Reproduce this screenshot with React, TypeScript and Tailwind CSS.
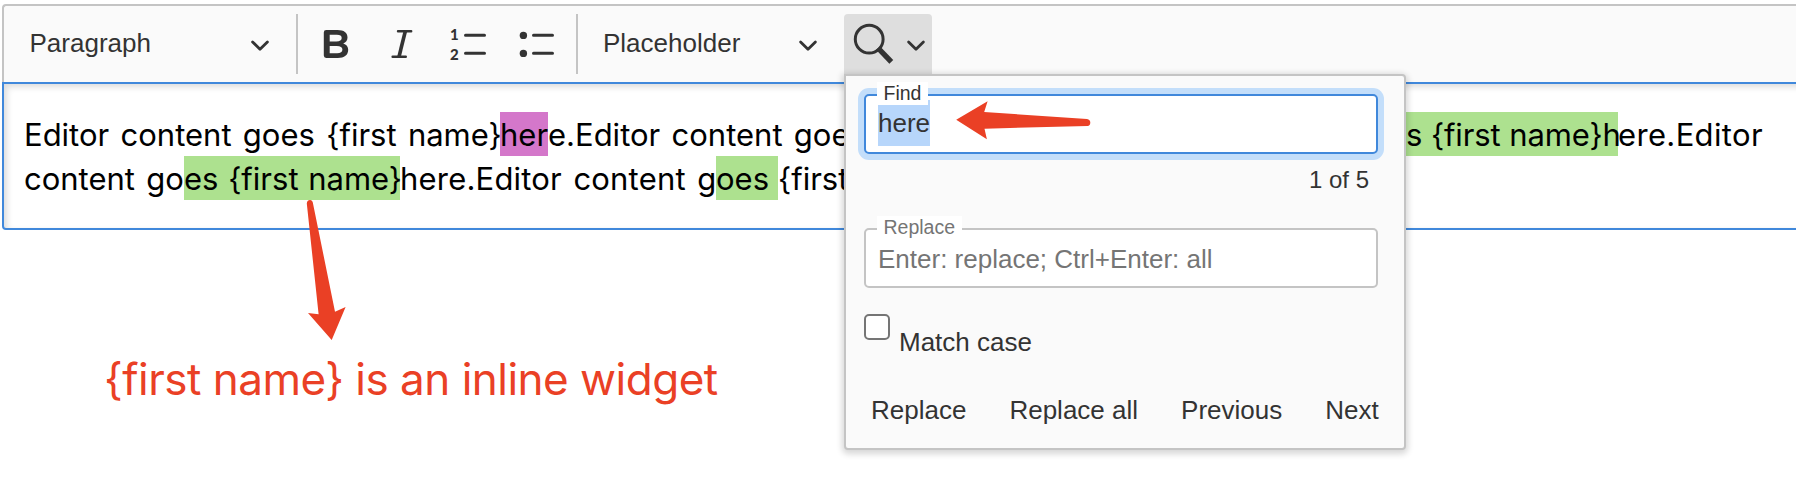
import React from "react";

function Chevron({ className = "" }: { className?: string }) {
  return (
    <svg viewBox="0 0 20 20" className={`h-5 w-5 shrink-0 ${className}`} fill="none" stroke="#333" strokeWidth="2.8" strokeLinecap="round" strokeLinejoin="round">
      <path d="M2.600 7.900 L10 15.300 L17.400 7.900" />
    </svg>
  );
}

function Divider() {
  return <div className="h-[60px] w-[2px] shrink-0 bg-[#c4c4c4]" />;
}

function FormatIcons() {
  return (
    <svg viewBox="0 0 278 60" className="h-[60px] w-[278px] shrink-0" fill="none" stroke="#333" strokeWidth="3" strokeLinecap="round">
      <path
        fill="#333"
        stroke="none"
        fillRule="evenodd"
        d="M28.200 16H39.500c6.500 0 10 2.700 10 7.400 0 2.900-1.600 5-4.300 6 3.200.8 5 3.200 5 6.400 0 5.200-3.800 8.200-10.400 8.200H28.200q-2.400 0-2.400-2.400V18.400q0-2.400 2.400-2.400zM31.700 20.800v6.700h6.600c3.600 0 5.400-1.100 5.400-3.400 0-2.200-1.600-3.300-4.800-3.300zM31.700 32v7.300h7.400c3.500 0 5.300-1.200 5.300-3.700 0-2.400-1.900-3.600-5.600-3.600z"
      />
      <path strokeWidth="2.400" d="M100 17.200h13.200M94.600 42.800h13.200" />
      <path strokeWidth="3.600" strokeLinecap="butt" d="M107.300 17.200L101 42.800" />
      <path d="M167.500 21.300h19M167.500 39.300h19M235.500 21.300h19M235.500 39.300h19" />
      <g fill="#333" stroke="none">
        <circle cx="225.400" cy="21.400" r="3.700" />
        <circle cx="225.400" cy="39.400" r="3.700" />
        <text x="152" y="26" className="font-['Lato',sans-serif] text-[15px] font-black">1</text>
        <text x="152" y="45.600" className="font-['Lato',sans-serif] text-[15px] font-black">2</text>
      </g>
    </svg>
  );
}

function Segment({ children, className = "" }: { children: React.ReactNode; className?: string }) {
  return <span className={`block h-11 shrink-0 pt-px ${className}`}>{children}</span>;
}

function Field({ label, focused, children }: { label: string; focused?: boolean; children: React.ReactNode }) {
  return (
    <div
      className={`relative flex h-[60px] w-[514px] items-start rounded-[5px] border-2 bg-white pl-3 ${
        focused ? "border-[#4088db] shadow-[0_0_0_6px_#c3defa]" : "border-[#c4c4c4]"
      }`}
    >
      {children}
      <span
        className={`absolute -top-[14px] left-[11px] flex h-[23px] items-center bg-white px-[6.5px] pt-px text-[19.5px] ${
          focused ? "text-[#333]" : "text-[#757575]"
        }`}
      >
        {label}
      </span>
    </div>
  );
}

function FindPanel() {
  return (
    <div className="absolute left-[844px] top-[74px] z-10 flex h-[376px] w-[562px] flex-col rounded-[4px] rounded-tl-none border-2 border-[#c4c4c4] bg-[#fafafa] pl-[18px] pt-[18px] shadow-[0_2px_6px_2px_rgba(0,0,0,0.16)]">
      <Field label="Find" focused>
        <span className="mt-1 h-[46px] bg-[#b7d6fb] pt-[4px] leading-[38px]">here</span>
      </Field>
      <div className="mt-[10px] flex h-8 w-[505px] items-center justify-end text-2xl">1 of 5</div>
      <div className="mt-8">
        <Field label="Replace">
          <span className="whitespace-nowrap pt-px leading-[56px] text-[#757575]">Enter: replace; Ctrl+Enter: all</span>
        </Field>
      </div>
      <div className="mt-[26px] flex h-12 items-start">
        <span className="h-[26px] w-[26px] rounded-[5px] border-2 border-[#757575] bg-white" />
        <span className="ml-[9px] mt-[12px] leading-8">Match case</span>
      </div>
      <div className="mt-8 flex gap-[43px] whitespace-nowrap pl-[7px] leading-8">
        <span>Replace</span>
        <span>Replace all</span>
        <span>Previous</span>
        <span>Next</span>
      </div>
    </div>
  );
}

export default function App() {
  return (
    <div className="relative h-[482px] w-[1796px] overflow-hidden bg-white pl-[2px] pt-1 font-['Liberation_Sans',sans-serif] text-[26px] text-[#333]">
      <div className="flex h-[78px] w-[1810px] items-start rounded-tl-[4px] border-l-2 border-t-2 border-[#c4c4c4] bg-[#fafafa] pt-2">
        <div className="flex h-[60px] w-[292px] items-center justify-between pl-[25.5px] pr-[26px]">
          <span className="pb-0.5">Paragraph</span>
          <Chevron />
        </div>
        <Divider />
        <FormatIcons />
        <Divider />
        <div className="flex h-[60px] w-[266px] items-center justify-between pl-[25px] pr-[26px]">
          <span className="pb-0.5">Placeholder</span>
          <Chevron />
        </div>
        <div className="flex h-[60px] w-[88px] items-center rounded-t-[4px] bg-[#dedede] pl-2">
          <svg viewBox="0 0 44 44" className="h-11 w-11 shrink-0" fill="none" stroke="#333">
            <circle cx="17.200" cy="17.200" r="13.900" strokeWidth="3" />
            <path d="M26 26L39.300 39.900" strokeWidth="5.400" />
          </svg>
          <Chevron className="ml-2.5" />
        </div>
      </div>
      <div className="h-[148px] w-[1810px] rounded-bl-[4px] border-2 border-[#4088db] bg-white pl-5 pt-7 font-['Inter',sans-serif] text-[31px] leading-[44px] text-black shadow-[inset_3px_3px_6px_rgba(0,0,0,0.14)]">
        <div className="flex whitespace-pre">
          <Segment className="w-[476px] [word-spacing:2.6px]">{"Editor content goes {first name}"}</Segment>
          <Segment className="w-[48px] bg-[#d477ca]">her</Segment>
          <Segment className="w-[858px] [word-spacing:2.6px]">{"e.Editor content goes {first name}"}</Segment>
          <Segment className="w-[212px] bg-[#ade18f] tracking-[-0.1px]">{"s {first name}h"}</Segment>
          <Segment className="tracking-[0.35px]">ere.Editor</Segment>
        </div>
        <div className="flex whitespace-pre">
          <Segment className="w-[160px] [word-spacing:2.6px]">content go</Segment>
          <Segment className="w-[216px] bg-[#ade18f] [word-spacing:1px]">{"es {first name}"}</Segment>
          <Segment className="w-[316px] tracking-[0.2px] [word-spacing:2.5px]">here.Editor content g</Segment>
          <Segment className="w-[62px] bg-[#ade18f]">{"oes "}</Segment>
          <Segment>{"{first name}"}</Segment>
        </div>
      </div>
      <p className="ml-[102px] mt-[124px] whitespace-nowrap font-['Inter',sans-serif] text-[44px] leading-[50px] tracking-[-0.5px] text-[#ea4025]">{"{first name} is an inline widget"}</p>
      <FindPanel />
      <svg viewBox="0 0 1796 482" className="pointer-events-none absolute inset-0 z-20 h-[482px] w-[1796px]" fill="#ea4025">
        <path d="M306.800 203.500Q307 200 310 200Q312.600 200 313 203.500L335 311.700L345.600 307L331.700 340L308 313L318.600 314.300Z" />
        <path d="M956.200 119.700L987.600 101.300L984.200 112L1087 119Q1090.300 119.500 1090.300 122.500Q1090.300 125.800 1087.500 126L984.500 128.700L986.900 139.300Z" />
      </svg>
    </div>
  );
}
